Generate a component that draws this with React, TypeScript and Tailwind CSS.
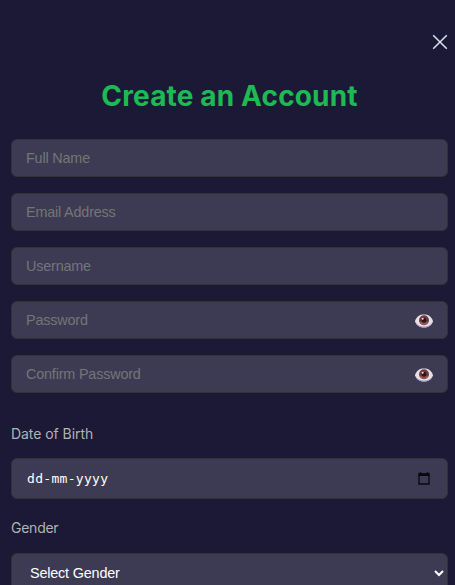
import type { ReactNode } from "react";

function Eye() {
  return (
    <svg className="relative top-px" width="18" height="14" viewBox="0 0 18 14" aria-hidden="true">
      <path d="M0 7.200C1.500 2.300 4.800.4 9 .4s7.500 1.900 9 6.800c-1.500 4.600-4.800 6.300-9 6.300S1.500 11.800 0 7.200Z" fill="#e6e0e8" />
      <path d="M0.300 7.800C2 11 5 12.600 9 12.600s7-1.600 8.700-4.800C16.200 11.800 13 13.500 9 13.500S1.800 11.800.3 7.800Z" fill="#a99bbd" />
      <circle cx="9" cy="6.300" r="5" fill="#713b3d" />
      <path d="M5.500 8.200a4 4 0 0 0 7 0" fill="none" stroke="#a15a50" strokeWidth="1.500" />
      <circle cx="9" cy="6.200" r="2.400" fill="#241722" />
      <circle cx="7.700" cy="4.700" r="1" fill="#eee3e6" />
    </svg>
  );
}

function Field({ text, icon }: { text: string; icon?: ReactNode }) {
  return (
    <div className="flex h-[38px] items-center justify-between rounded-[6px] border border-[#333333] bg-[#3d3b54] pr-[14px] pl-[14px] font-['Liberation_Sans',Arial,sans-serif] text-[14.4px] leading-4 text-[#757575]">
      <span className="tracking-[-0.18px]">{text}</span>
      {icon}
    </div>
  );
}

export default function App() {
  return (
    <main className="flex h-[585px] w-[455px] flex-col overflow-hidden bg-[#1b1935] pr-[7px] pl-[11px] font-[Inter,sans-serif]">
      <div className="flex h-[50px] shrink-0 items-end justify-end">
        <button aria-label="Close" className="h-4 w-4">
          <svg width="16" height="16" viewBox="0 0 16 16" fill="none" stroke="#d6dcea" strokeWidth="1.6">
            <path d="m1.200 1.200 13.600 13.600m0-13.600L1.200 14.800" />
          </svg>
        </button>
      </div>
      <h1 className="mt-7 h-9 shrink-0 text-center text-[28px] leading-9 font-[650] tracking-[0.15px] whitespace-nowrap text-[#1db954]">
        Create an Account
      </h1>
      <form className="mt-[25px] flex shrink-0 flex-col gap-4">
        <Field text="Full Name" />
        <Field text="Email Address" />
        <Field text="Username" />
        <Field text="Password" icon={<Eye />} />
        <Field text="Confirm Password" icon={<Eye />} />
      </form>
      <div className="mt-[31px] h-5 shrink-0 text-[14px] leading-5 text-[#b3b3b3]">
        <span className="tracking-[-0.05px]">Date of Birth</span>
      </div>
      <div className="mt-[14px] flex h-[41px] shrink-0 items-center justify-between rounded-[6px] border border-[#333333] bg-[#3d3b54] pr-[17px] pl-[15px] font-['DejaVu_Sans_Mono',monospace] text-[13px] text-white">
        <span className="tracking-[0.3px]">dd-mm-yyyy</span>
        <svg width="12" height="13" viewBox="0 0 12 13" aria-hidden="true">
          <path d="M1 2h10v10H1zM2.500 0v2m7-2v2" fill="none" stroke="#080810" strokeWidth="1.300" />
          <path d="M.5 1.500h11V4H.5z" fill="#080810" />
        </svg>
      </div>
      <div className="mt-[19px] h-5 shrink-0 text-[14px] leading-5 text-[#b3b3b3]">
        <span className="tracking-[-0.25px]">Gender</span>
      </div>
      <div className="mt-[15px] flex h-[41px] shrink-0 items-center justify-between rounded-[6px] border border-[#333333] bg-[#3d3b54] pr-[3px] pl-[18px] font-['Liberation_Sans',Arial,sans-serif] text-[14.4px] text-white">
        <span className="tracking-[-0.18px]">Select Gender</span>
        <svg width="10" height="7" viewBox="0 0 10 7" fill="none" stroke="white" strokeWidth="2" aria-hidden="true">
          <path d="m1 1 4 4 4-4" />
        </svg>
      </div>
    </main>
  );
}
